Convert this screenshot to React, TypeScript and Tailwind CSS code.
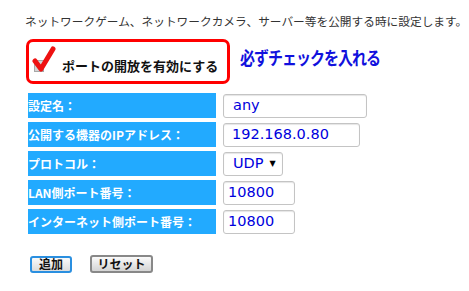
import React from 'react';

const jp = "font-['Noto_Sans_CJK_JP','Noto_Sans',sans-serif]";

interface FieldRow {
  label: string;
  value: string;
  box: string;
  select?: boolean;
}

const rows: FieldRow[] = [
  { label: '設定名：', value: 'any', box: 'w-[144px] pl-[9px]' },
  { label: '公開する機器のIPアドレス：', value: '192.168.0.80', box: 'w-[137px] pl-[8px]' },
  { label: 'プロトコル：', value: 'UDP', box: 'w-[60px] pl-[9px]', select: true },
  { label: 'LAN側ポート番号：', value: '10800', box: 'w-[72px] pl-[4px]' },
  { label: 'インターネット側ポート番号：', value: '10800', box: 'w-[72px] pl-[4px]' },
];

const CheckMark = () => (
  <svg width="24" height="28" viewBox="0 0 24 28" className="absolute left-[-3px] top-[-15px]">
    <path d="M3 15 L9 23 L21 3" fill="none" stroke="#ee1111" strokeWidth="5" strokeLinecap="round" strokeLinejoin="round" />
  </svg>
);

export default function App() {
  return (
    <div className={`w-[469px] h-[291px] bg-white overflow-hidden ${jp}`}>
      <p className="pl-[25px] pt-[14px] text-[11.7px] leading-[14px] text-[#333] whitespace-nowrap">
        ネットワークゲーム、ネットワークカメラ、サーバー等を公開する時に設定します。
      </p>

      {/* checkbox block */}
      <div className="flex items-center mt-[11px] pl-[26px]">
        <div className="flex items-center w-[204px] h-[45px] border-[3px] border-[#ff0000] rounded-[7px] pl-[5px]">
          <div className="relative w-[10px] h-[12px] mt-[9px] bg-[#d4d4d4] border border-[#a8a8a8]">
            <CheckMark />
          </div>
          <span className="ml-[18px] mt-[8px] text-[13px] font-bold text-[#111] leading-none">
            ポートの開放を有効にする
          </span>
        </div>
        <span className="ml-[10px] mb-[8px] text-[15px] font-bold text-[#1111dd] leading-none tracking-[-1px] scale-y-[1.2]">
          必ずチェックを入れる
        </span>
      </div>

      {/* settings table */}
      <div className="mt-[9px] pl-[28px] flex flex-col gap-[4px]">
        {rows.map((r) => (
          <div key={r.label} className="flex items-center gap-[7px] h-[25px]">
            <div className="w-[188px] h-[25px] bg-[#22aaff] flex items-center text-white text-[12px] font-bold leading-none">
              {r.label}
            </div>
            <div
              className={`${r.box} h-[24px] border border-[#c4c4c4] rounded-[3px] shadow-[inset_0_1px_1px_#e5e5e5] flex items-center text-[#0000dd] text-[14.5px] font-['DejaVu_Sans',Verdana,sans-serif] leading-none`}
            >
              <span>{r.value}</span>
              {r.select && <span className="ml-[6px] text-[8px] text-black">▼</span>}
            </div>
          </div>
        ))}
      </div>

      {/* buttons */}
      <div className="flex items-center gap-[18px] mt-[21px] pl-[30px]">
        <button className="w-[42px] h-[17px] border-2 border-[#2a8fe0] rounded-[3px] bg-gradient-to-b from-[#fafafa] to-[#dcdcdc] text-[12px] font-bold text-[#111] leading-none">
          追加
        </button>
        <button className="w-[63px] h-[18px] border-2 border-[#888] rounded-[3px] bg-gradient-to-b from-[#fafafa] to-[#d4d4d4] text-[12px] font-bold text-[#111] leading-none">
          リセット
        </button>
      </div>
    </div>
  );
}
